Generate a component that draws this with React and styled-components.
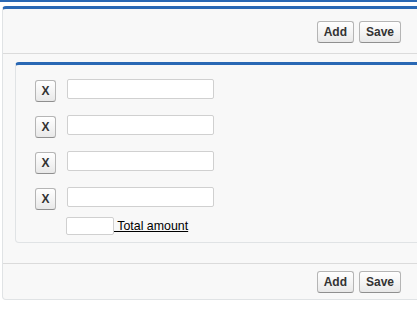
import React from 'react'
import styled, { createGlobalStyle } from 'styled-components'

const GlobalStyle = createGlobalStyle`
  body {
    margin: 0;
    background: #fff;
    font-family: Arial, "Liberation Sans", Helvetica, sans-serif;
    font-size: 12px;
    color: #222;
    overflow: hidden;
  }
`

const BLUE = '#2a68b4'

const TopRule = styled.div`
  height: 2px;
  background: ${BLUE};
`

const PageBlock = styled.div`
  margin: 4px 0 0 2px;
  width: 440px;
  background: #f8f8f8;
  border: 1px solid #e0e3e5;
  border-top: 3px solid ${BLUE};
  border-radius: 4px;
`

const ButtonBar = styled.div`
  display: flex;
  justify-content: flex-end;
  gap: 5px;
  padding: ${(p) => (p.bottom ? '7px 42px 6px 0' : '12px 42px 10px 0')};
  border-${(p) => (p.bottom ? 'top' : 'bottom')}: 1px solid #dbdbdb;
`

const Btn = styled.button`
  height: 22px;
  padding: 0 6px;
  font-family: Arial, "Liberation Sans", sans-serif;
  font-size: 12px;
  font-weight: bold;
  color: #333;
  background: linear-gradient(#ffffff, #f2f2f2 60%, #e8e8e8);
  border: 1px solid #b5b5b5;
  border-bottom-color: #8f8f8f;
  border-radius: 3px;
  line-height: 20px;
  cursor: pointer;
`

const Section = styled.div`
  margin: 8px 0 20px 12px;
  background: #f8f8f8;
  border: 1px solid #e0e3e5;
  border-top: 3px solid ${BLUE};
  border-radius: 4px;
  padding: 14px 0 7px 19px;
`

const Rows = styled.div`
  display: flex;
  flex-direction: column;
  gap: 14px;
`

const Row = styled.div`
  display: flex;
  align-items: flex-start;
  gap: 11px;
  height: 22px;
`

const RemoveBtn = styled(Btn)`
  width: 21px;
  padding: 0;
  margin-top: 1px;
`

const TextInput = styled.input`
  box-sizing: border-box;
  width: ${(p) => p.w}px;
  height: ${(p) => p.h}px;
  margin: 0;
  padding: 0 2px;
  border: 1px solid #d0d0d0;
  border-radius: 2px;
  background: #fff;
  font-size: 12px;
`

const TotalRow = styled.div`
  display: flex;
  align-items: center;
  margin: 8px 0 0 31px;
`

const TotalLabel = styled.a`
  color: #000;
  font-size: 12.4px;
  text-decoration: underline;
  white-space: pre;
`

export default function App() {
  const rows = [0, 1, 2, 3]
  return (
    <>
      <GlobalStyle />
      <TopRule />
      <PageBlock>
        <ButtonBar>
          <Btn>Add</Btn>
          <Btn>Save</Btn>
        </ButtonBar>
        <Section>
          <Rows>
            {rows.map((i) => (
              <Row key={i}>
                <RemoveBtn>X</RemoveBtn>
                <TextInput w={147} h={20} />
              </Row>
            ))}
          </Rows>
          <TotalRow>
            <TextInput w={48} h={18} />
            <TotalLabel>{' Total amount'}</TotalLabel>
          </TotalRow>
        </Section>
        <ButtonBar bottom>
          <Btn>Add</Btn>
          <Btn>Save</Btn>
        </ButtonBar>
      </PageBlock>
    </>
  )
}
